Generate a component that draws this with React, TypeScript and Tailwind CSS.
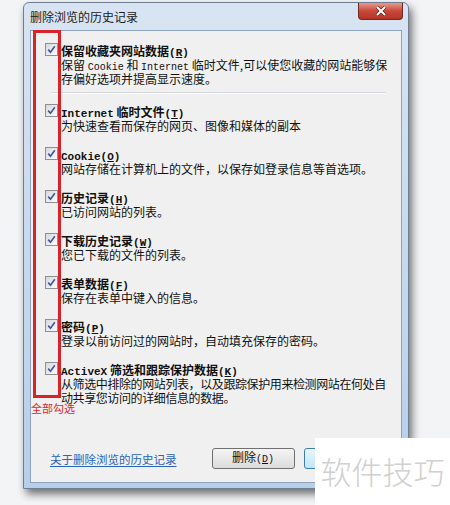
import React from 'react';

const cjk = "font-['Noto_Sans_CJK_SC',sans-serif]";

// Latin bits render like SimSun: narrow monospace serif
const M = ({ children, bold }: { children: React.ReactNode; bold?: boolean }) => (
    <span className={`font-['Liberation_Mono',monospace] leading-[14px] ${bold ? 'text-[11px] font-bold' : 'text-[10px]'}`}>{children}</span>
);

const CheckBox = () => (
    <span className="mt-[-1px] flex h-[13px] w-[13px] shrink-0 items-center justify-center border border-[#8e8f8f] bg-linear-to-br from-[#d6d9dd] to-[#fbfbfb]">
        <svg width="9" height="9" viewBox="0 0 9 9">
            <path d="M1.2 4.6 L3.5 7.2 L7.8 1.2" fill="none" stroke="#41569a" strokeWidth="1.6" />
        </svg>
    </span>
);

const items = [
    {
        title: <>保留收藏夹网站数据<M bold>(<u>R</u>)</M></>,
        desc: [
            <>保留 <M>Cookie</M> 和 <M>Internet</M> 临时文件,可以使您收藏的网站能够保</>,
            <>存偏好选项并提高显示速度。</>,
        ],
        sep: true,
    },
    {
        title: <><M bold>Internet</M> 临时文件<M bold>(<u>T</u>)</M></>,
        desc: [<>为快速查看而保存的网页、图像和媒体的副本</>],
    },
    { title: <><M bold>Cookie(<u>O</u>)</M></>, desc: [<>网站存储在计算机上的文件，以保存如登录信息等首选项。</>] },
    { title: <>历史记录<M bold>(<u>H</u>)</M></>, desc: [<>已访问网站的列表。</>] },
    { title: <>下载历史记录<M bold>(<u>W</u>)</M></>, desc: [<>您已下载的文件的列表。</>] },
    { title: <>表单数据<M bold>(<u>F</u>)</M></>, desc: [<>保存在表单中键入的信息。</>] },
    { title: <>密码<M bold>(<u>P</u>)</M></>, desc: [<>登录以前访问过的网站时，自动填充保存的密码。</>] },
    {
        title: <><M bold>ActiveX</M> 筛选和跟踪保护数据<M bold>(<u>K</u>)</M></>,
        desc: [<>从筛选中排除的网站列表，以及跟踪保护用来检测网站在何处自</>, <>动共享您访问的详细信息的数据。</>],
        tight: true,
    },
];

const App = () => {
    return (
        <div className={`relative h-[505px] w-[450px] overflow-hidden bg-[#f3f4f6] ${cjk}`}>
            {/* dialog window */}
            <div className="ml-[23px] mt-[2px] flex h-[487px] w-[386px] flex-col rounded-t-[6px] border border-[#6f7f92] bg-linear-to-b from-[#d8e4f2] to-[#b8cfe9] shadow-[3px_5px_8px_rgba(0,0,0,0.55)]">
                <div className="flex h-[27px] items-center pl-[6px]">
                    <span className="text-[12px] leading-none text-[#1b1b1b]">删除浏览的历史记录</span>
                    <div className="ml-auto mr-[5px] flex h-[17px] w-[45px] items-center justify-center self-start rounded-b-[4px] border border-t-0 border-[#6d2a22] bg-linear-to-b from-[#e59a8c] via-[#c8483a] to-[#b53325]">
                        <svg width="12" height="10" viewBox="0 0 12 10">
                            <path d="M2 1 L10 9 M10 1 L2 9" stroke="#5a1a14" strokeWidth="3.4" />
                            <path d="M2 1 L10 9 M10 1 L2 9" stroke="#ffffff" strokeWidth="2" />
                        </svg>
                    </div>
                </div>

                {/* client area */}
                <div className="mx-[6px] mb-[5px] flex flex-1 flex-col border border-[#8da2bb] bg-[#f0f0f0] pt-[13px] text-[12px] leading-[14px] text-[#111]">
                    <div className="flex flex-col gap-[15px] pl-[14px]">
                        {items.map((it, i) => (
                            <div key={i} className="flex flex-col">
                                <div className="flex gap-[3px]">
                                    <CheckBox />
                                    <div className="flex flex-col">
                                        <div className="h-[14px] whitespace-nowrap font-bold">{it.title}</div>
                                        {it.desc.map((d, j) => (
                                            <div key={j} className={`h-[14px] whitespace-nowrap ${it.tight ? 'tracking-[-0.4px]' : ''}`}>{d}</div>
                                        ))}
                                    </div>
                                </div>
                                {it.sep && <div className="ml-[6px] mt-[6px] mb-[-4px] h-[2px] w-[335px] border-t border-b border-t-[#d5d9de] border-b-white" />}
                            </div>
                        ))}
                    </div>

                    <div className="mt-auto mb-[13px] flex items-center pl-[19px]">
                        <span className="text-[11.5px] text-[#2a64bd] underline underline-offset-2">关于删除浏览的历史记录</span>
                        <button className="ml-[35px] h-[21px] w-[83px] rounded-[3px] border border-[#707070] bg-linear-to-b from-[#f4f4f4] to-[#dcdcdc] text-[12px] text-[#111]">
                            删除<M>(<u>D</u>)</M>
                        </button>
                        <button className="ml-[9px] h-[21px] w-[83px] rounded-[3px] border border-[#3c7fb1] bg-linear-to-b from-[#eaf6fd] to-[#bee6fd] text-[12px]">
                            退出
                        </button>
                    </div>
                </div>
            </div>

            {/* annotation: red box around checkboxes */}
            <div className="absolute left-[33px] top-[30px] h-[368px] w-[28px] border-[3px] border-[#d8232a]" />
            <span className="absolute left-[31px] top-[402px] text-[11px] leading-[13px] text-[#e3262c]">全部勾选</span>

            {/* watermark */}
            <div className="absolute left-[315px] top-[438px] flex h-[67px] w-[135px] items-center justify-center bg-white">
                <span className="text-[31px] font-light text-[#d0d0d0]">软件技巧</span>
            </div>
        </div>
    );
};

export default App;
